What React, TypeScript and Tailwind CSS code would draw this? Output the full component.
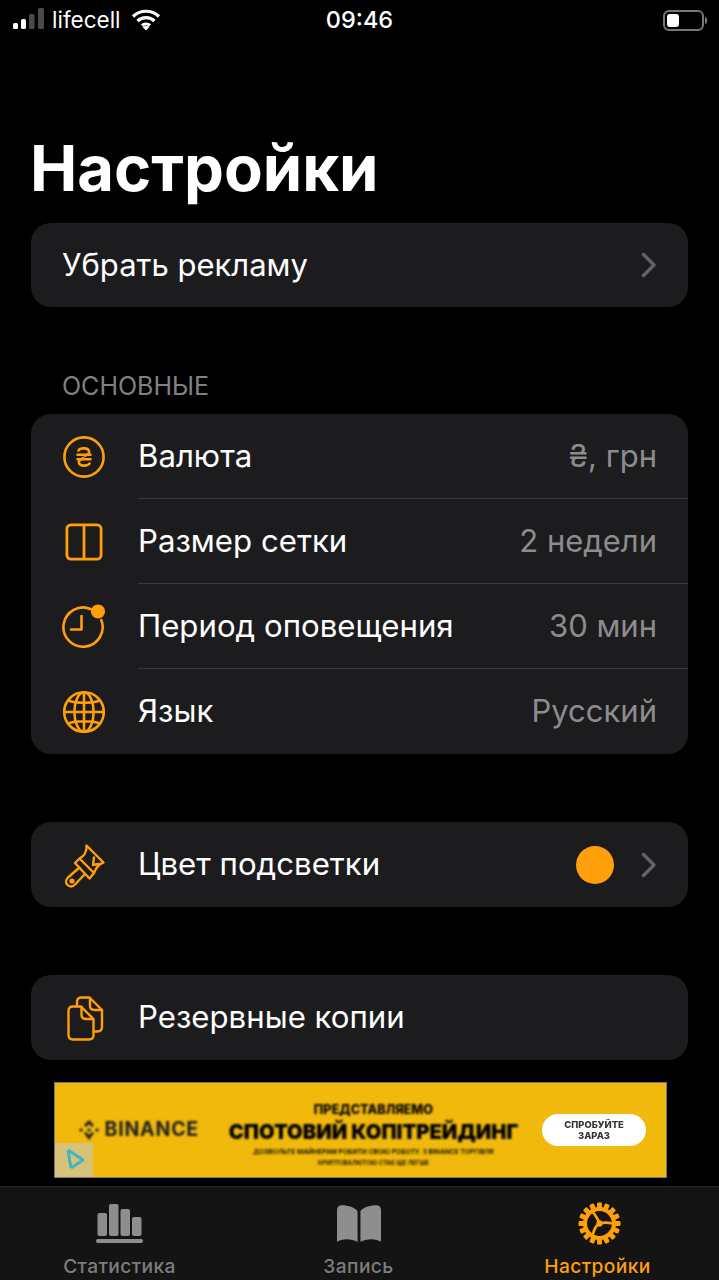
const orange = "#FF9F0A";

function Row({ icon, label, value, last }: { icon: React.ReactNode; label: string; value?: string; last?: boolean }) {
  return (
    <div className="flex h-[85px] items-center">
      <div className="mr-[1px] flex w-[106px] shrink-0 items-center justify-center">{icon}</div>
      <div className={"flex h-full flex-1 items-center justify-between pr-[31px] " + (last ? "" : "border-b border-[#38383a]")}>
        <span className="text-[31.2px] text-white">{label}</span>
        {value && <span className="text-[31px] text-[#8c8c8e]">{value}</span>}
      </div>
    </div>
  );
}

function Chevron() {
  return (
    <svg width="16" height="26" viewBox="0 0 16 26" fill="none" stroke="#636366" strokeWidth="3.4" strokeLinecap="round" strokeLinejoin="round">
      <path d="M2.5 2.5 13 13 2.5 23.5" />
    </svg>
  );
}

function HryvniaIcon() {
  return (
    <svg width="44" height="44" viewBox="0 0 44 44" fill="none" stroke={orange} strokeWidth="2.6" strokeLinecap="round">
      <circle cx="22" cy="22" r="19.6" />
      <path d="M16.500 15.500c1.500-2.800 10-3.200 10.600 1 .3 2-1.800 3.400-4.100 4.300" />
      <path d="M27.500 28.500c-1.500 2.800-10 3.200-10.600-1-.3-2 1.800-3.400 4.100-4.300" />
      <path d="M15.500 19.800h13M15.500 24.200h13" />
    </svg>
  );
}

function GridIcon() {
  return (
    <svg width="38" height="38" viewBox="0 0 38 38" fill="none" stroke={orange} strokeWidth="2.8">
      <rect x="1.900" y="1.900" width="34.200" height="34.200" rx="4" />
      <path d="M19 2v34" />
    </svg>
  );
}

function ClockIcon() {
  return (
    <svg width="46" height="46" viewBox="0 0 46 46" fill="none" stroke={orange} strokeWidth="2.6" strokeLinecap="round" strokeLinejoin="round">
      <path d="M30 5.200A19.600 19.600 0 1 0 40.300 16" />
      <path d="M20.500 12v13.500H10" />
      <circle cx="37" cy="7.500" r="7" fill={orange} stroke="none" />
    </svg>
  );
}

function GlobeIcon() {
  return (
    <svg width="44" height="44" viewBox="0 0 44 44" fill="none" stroke={orange} strokeWidth="2.6">
      <circle cx="22" cy="22" r="19.800" />
      <ellipse cx="22" cy="22" rx="9.500" ry="19.800" />
      <path d="M22 2v40M2.200 22h39.600M6 10.500c8 3 24 3 32 0M6 33.500c8-3 24-3 32 0" />
    </svg>
  );
}

function BrushIcon() {
  return (
    <svg width="50" height="50" viewBox="-1 0 50 50" fill="none" stroke={orange} strokeWidth="2.400" strokeLinejoin="round" strokeLinecap="round">
      <path d="M26.500 5.500 43.500 22.500C39 24 36 27.500 34 33L19.500 18.500C24 16.500 27 11.500 26.500 5.500Z" />
      <path d="M34 17.500 33 25 38.500 24" />
      <path d="M19.500 18.500 15 23 29.500 38.500 34 33" />
      <path d="M19.500 27.500 8 37.500C5.500 40 5.500 43 7.500 45 9.500 47 12.500 47 15 44.500L25 34" />
      <circle cx="12" cy="41" r="1.400" fill={orange} />
    </svg>
  );
}

function CopiesIcon() {
  return (
    <svg width="50" height="50" viewBox="-1 0 50 50" fill="none" stroke={orange} strokeWidth="2.400" strokeLinejoin="round" strokeLinecap="round">
      <path d="M8.500 18c0-3 1.500-4.500 4.500-4.500H21L33.500 26V42c0 3-1.500 4.500-4.500 4.500H13c-3 0-4.500-1.500-4.500-4.500Z" />
      <path d="M21.500 14V21.500c0 3 1.500 4.500 4.500 4.500H33" />
      <path d="M17 13V9c0-3 1.500-4.500 4.500-4.500H29.500L42 17V34c0 3-1.500 4.500-4.500 4.500H34" />
      <path d="M30 5V13c0 3 1.500 4 4.500 4H42" />
    </svg>
  );
}

function StatsIcon({ color }: { color: string }) {
  return (
    <svg width="48" height="42" viewBox="0 0 48 42" fill={color}>
      <rect x="1.500" y="11" width="9.500" height="23" rx="2" />
      <rect x="13" y="2" width="9.500" height="32" rx="2" />
      <rect x="24.500" y="7" width="9.500" height="27" rx="2" />
      <rect x="36" y="15" width="9.500" height="19" rx="2" />
      <rect x="0" y="37" width="47" height="4" rx="2" />
    </svg>
  );
}

function BookIcon({ color }: { color: string }) {
  return (
    <svg width="44" height="37" viewBox="0 0 46 38" fill={color}>
      <path d="M21.500 6C19 2.500 12 0 5 0 2 0 0 2 0 5v33c5-3.500 15-3.500 21.500 0z" />
      <path d="M24.500 6C27 2.500 34 0 41 0c3 0 5 2 5 5v33c-5-3.500-15-3.500-21.500 0z" />
    </svg>
  );
}

function GearIcon({ color }: { color: string }) {
  const teeth = Array.from({ length: 16 }, (_, i) => i * 22.5);
  return (
    <svg width="43" height="43" viewBox="0 0 44 44" fill="none" className="ml-[3px]">
      {teeth.map((a) => (
        <rect key={a} x="19.500" y="0.500" width="5" height="6.500" rx="1" fill={color} transform={`rotate(${a} 22 22)`} />
      ))}
      <circle cx="22" cy="22" r="14.800" stroke={color} strokeWidth="4.200" />
      <path d="M22 22C21 18 18 14 15 10M22 22C19 23.500 16.500 28 15 33.500M22 22C26 21 31 21 35 22" stroke={color} strokeWidth="2.800" />
      <circle cx="22" cy="22" r="3.200" fill={color} />
    </svg>
  );
}

function Tab({ icon, label, color }: { icon: React.ReactNode; label: string; color: string }) {
  return (
    <div className="flex w-[239px] flex-col items-center">
      <div className="flex h-[46px] items-center justify-center">{icon}</div>
      <span className="mt-[8px] text-[19.2px] leading-[24px] font-medium tracking-[0.4px]" style={{ color }}>{label}</span>
    </div>
  );
}

export default function App() {
  return (
    <div className="flex h-[1280px] w-[719px] flex-col overflow-hidden bg-black font-['Inter','Noto_Sans',sans-serif]">
      {/* status bar */}
      <div className="relative flex h-[40px] items-center pl-[13px] pr-[12px]">
        <svg width="32" height="22" viewBox="0 0 32 22" className="mb-[2px]">
          <rect x="0" y="15" width="5" height="6" rx="1.500" fill="#fff" />
          <rect x="8" y="11" width="5" height="10" rx="1.500" fill="#fff" />
          <rect x="16" y="6" width="5.500" height="15" rx="1.500" fill="#4a4a4a" />
          <rect x="25" y="0" width="6" height="21" rx="1.500" fill="#4a4a4a" />
        </svg>
        <span className="ml-[7px] text-[22.500px] leading-none text-white">lifecell</span>
        <svg width="30" height="22" viewBox="0 0 30 22" fill="none" stroke="#fff" strokeWidth="3.200" className="ml-[10px]">
          <path d="M2 7.500c7-7 19-7 26 0M6.500 12c4.500-4.500 12.500-4.500 17 0M11 16.500c2-2 6-2 8 0" />
          <path d="M15 21.500 11.500 18c2-1.500 5-1.500 7 0z" fill="#fff" stroke="none" />
        </svg>
        <span className="absolute left-0 right-0 text-center text-[23.500px] leading-none font-medium text-white">09:46</span>
        <div className="ml-auto flex items-center">
          <div className="flex h-[21px] w-[41px] items-center rounded-[6px] border-2 border-[#777] p-[2px]">
            <div className="h-full w-[12px] rounded-[3px] bg-white" />
          </div>
          <div className="ml-[1px] h-[7px] w-[2px] rounded-r-sm bg-[#777]" />
        </div>
      </div>

      <h1 className="mt-[90px] pl-[30px] text-[63.300px] leading-[76px] font-bold text-white">Настройки</h1>

      <div className="mt-[17px] flex flex-col px-[31px]">
        <div className="flex h-[84px] items-center justify-between rounded-[20px] bg-[#1c1c1e] pl-[31px] pr-[31px]">
          <span className="text-[31px] text-white">Убрать рекламу</span>
          <Chevron />
        </div>

        <div className="mt-[63px] pl-[31px] text-[25px] leading-[32px] text-[#808082]">ОСНОВНЫЕ</div>

        <div className="mt-[12px] overflow-hidden rounded-[20px] bg-[#1c1c1e]">
          <Row icon={<HryvniaIcon />} label="Валюта" value="₴, грн" />
          <Row icon={<GridIcon />} label="Размер сетки" value="2 недели" />
          <Row icon={<ClockIcon />} label="Период оповещения" value="30 мин" />
          <Row icon={<GlobeIcon />} label="Язык" value="Русский" last />
        </div>

        <div className="mt-[68px] flex h-[85px] items-center rounded-[20px] bg-[#1c1c1e]">
          <div className="mr-[1px] flex w-[106px] shrink-0 items-center justify-center"><BrushIcon /></div>
          <span className="text-[31.200px] text-white">Цвет подсветки</span>
          <div className="ml-auto mr-[27px] h-[38px] w-[38px] rounded-full bg-[#FF9F0A]" />
          <div className="mr-[31px]"><Chevron /></div>
        </div>

        <div className="mt-[68px] flex h-[85px] items-center rounded-[20px] bg-[#1c1c1e]">
          <div className="mr-[1px] flex w-[106px] shrink-0 items-center justify-center"><CopiesIcon /></div>
          <span className="text-[31.200px] text-white">Резервные копии</span>
        </div>
      </div>

      {/* ad */}
      <div className="relative mt-[22px] ml-[54px] flex h-[96px] w-[613px] items-center border border-[#777] bg-[#F0B90B]">
        <div className="flex w-[144px] shrink-0 items-center justify-end gap-[4px] text-[#1e2026] blur-[0.8px]">
          <svg width="22" height="22" viewBox="0 0 22 22" fill="#1e2026">
            <path d="M11 1 6 6l2 2 3-3 3 3 2-2zM3 9l2 2-2 2-2-2zM19 9l2 2-2 2-2-2zM11 9l2 2-2 2-2-2zM6 14l5 7 5-7-2-1-3 3-3-3z" />
          </svg>
          <span className="text-[19.500px] leading-none font-bold tracking-[0.8px]">BINANCE</span>
        </div>
        <div className="ml-[27px] flex w-[295px] shrink-0 flex-col items-center pt-[10px] text-black blur-[1px]">
          <span className="text-[12.700px] leading-[14px] font-extrabold">ПРЕДСТАВЛЯЕМО</span>
          <span className="mt-[2px] text-[20.200px] leading-[26px] font-black whitespace-nowrap">СПОТОВИЙ КОПІТРЕЙДИНГ</span>
          <span className="mt-[2px] text-[6.700px] leading-[11px] font-semibold whitespace-nowrap">ДОЗВОЛЬТЕ МАЙНЕРАМ РОБИТИ СВОЮ РОБОТУ. З BINANCE ТОРГІВЛЯ</span>
          <span className="text-[6px] leading-[10px] font-semibold whitespace-nowrap">КРИПТОВАЛЮТОЮ СТАЄ ЩЕ ЛЕГШЕ</span>
        </div>
        <div className="ml-[21px] flex h-[32px] w-[104px] shrink-0 flex-col items-center justify-center rounded-full bg-white text-[9.400px] leading-[11px] font-extrabold text-[#333] blur-[0.7px]">
          <span>СПРОБУЙТЕ</span>
          <span>ЗАРАЗ</span>
        </div>
        <div className="absolute bottom-0 left-0 flex h-[34px] w-[38px] items-center justify-center bg-[#d8c27a]">
          <svg width="24" height="26" viewBox="0 0 24 26" fill="none" stroke="#3fb6c6" strokeWidth="3" strokeLinejoin="round">
            <path d="M6 3 21 13 9 21" />
            <path d="M6 3l3 18" />
          </svg>
        </div>
      </div>

      {/* tab bar */}
      <div className="mt-[8px] flex flex-1 border-t border-[#262626] bg-[#141414] pt-[13px]">
        <Tab icon={<StatsIcon color="#8e8e8e" />} label="Статистика" color="#7d7d7d" />
        <Tab icon={<BookIcon color="#8e8e8e" />} label="Запись" color="#7d7d7d" />
        <Tab icon={<GearIcon color={orange} />} label="Настройки" color={orange} />
      </div>
    </div>
  );
}
